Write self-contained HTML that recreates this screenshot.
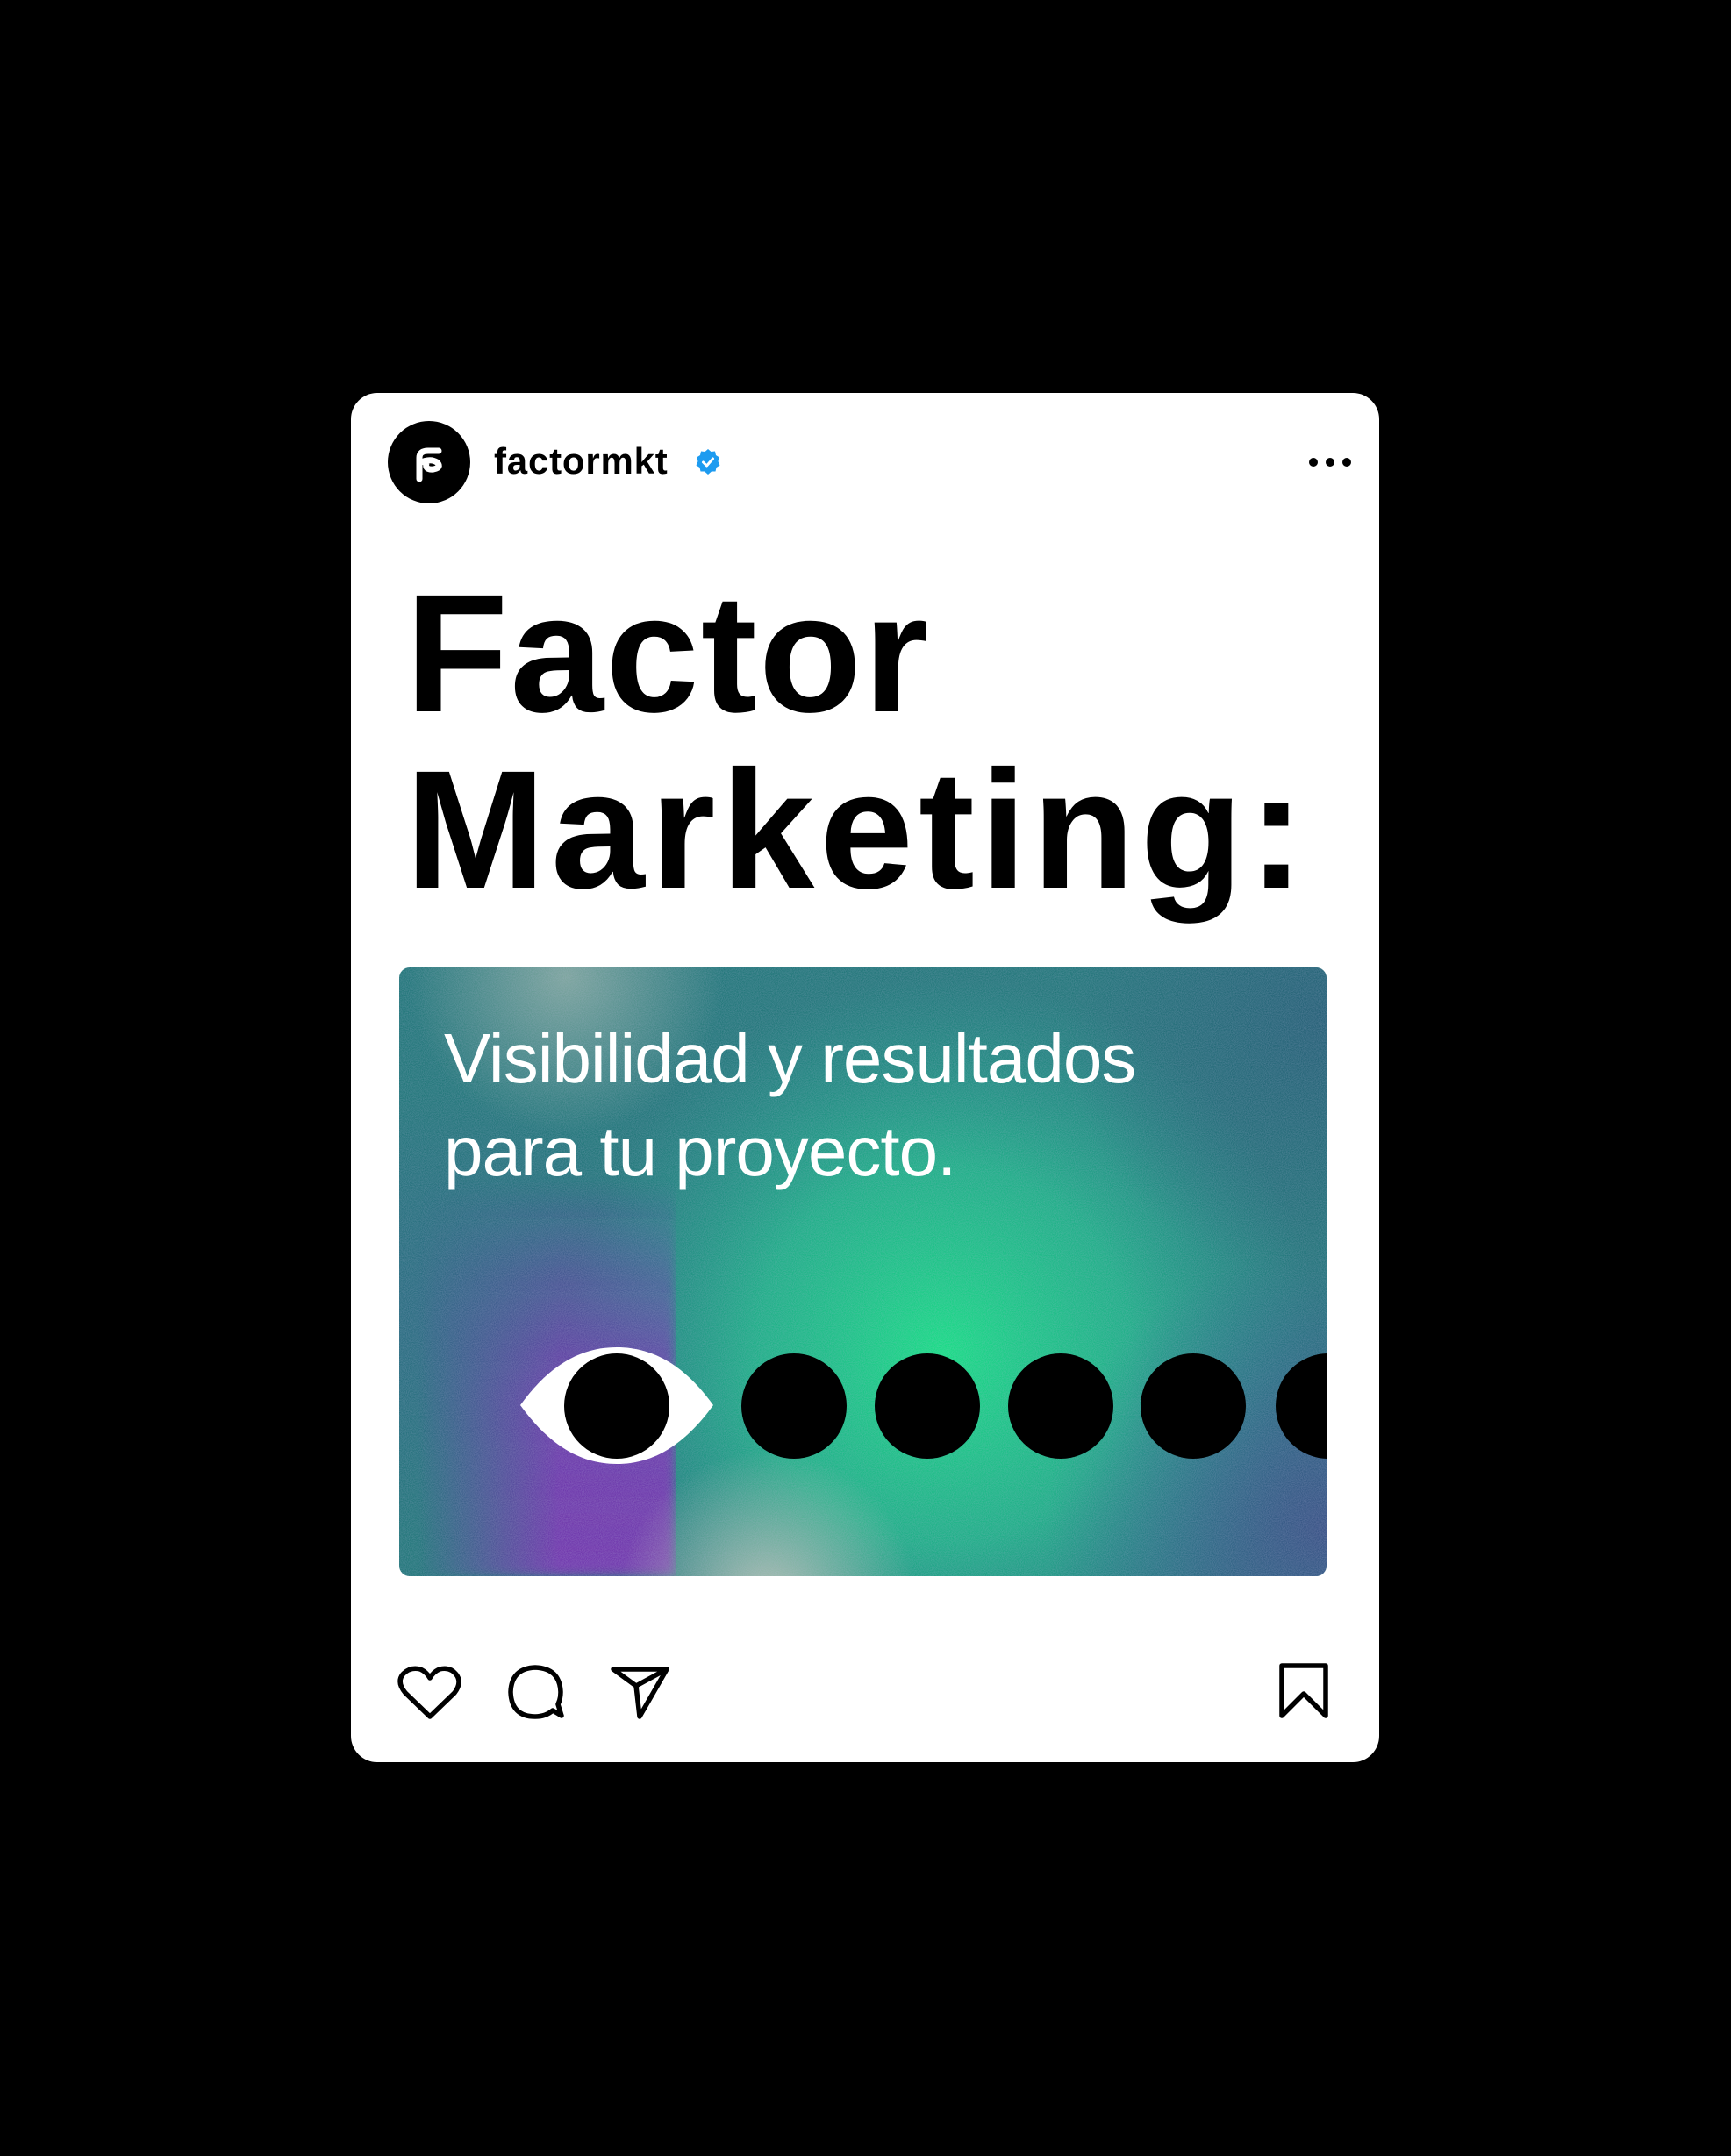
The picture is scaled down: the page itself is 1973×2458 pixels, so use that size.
<!DOCTYPE html>
<html><head><meta charset="utf-8"><style>
html,body{margin:0;padding:0;background:#000;}
body{width:1973px;height:2458px;position:relative;overflow:hidden;font-family:"Liberation Sans",sans-serif;}
.card{position:absolute;left:400px;top:448px;width:1172px;height:1561px;background:#fff;border-radius:30px;}
.av{position:absolute;left:442px;top:480px;width:94px;height:94px;border-radius:50%;background:#000;}
.user{position:absolute;left:563px;top:498px;font-weight:bold;font-size:42px;letter-spacing:0.8px;color:#000;line-height:56px;}
.h{position:absolute;left:462px;font-weight:bold;font-size:192px;color:#000;line-height:1;white-space:nowrap;}
.img{position:absolute;left:455px;top:1103px;width:1057px;height:694px;border-radius:12px;overflow:hidden;}
.sub{position:absolute;left:506px;font-size:80px;color:#fff;line-height:1;letter-spacing:-1px;white-space:nowrap;}
</style></head><body>
<div class="card"></div>
<div class="av"></div>
<svg style="position:absolute;left:442px;top:480px" width="94" height="94" viewBox="0 0 94 94">
<path d="M36 66 V42 Q36 34 46 34 H58 M36 48 Q48 42 56 47 Q62 53 52 55 Q42 56 44 48" fill="none" stroke="#fff" stroke-width="7" stroke-linecap="round"/>
</svg>
<div class="user">factormkt</div>
<svg style="position:absolute;left:791px;top:511px" width="32" height="32" viewBox="0 0 32 32">
<path d="M16 1 L19.5 4 L24 3.5 L25 8 L29 10.5 L27.5 15 L29.5 19.5 L25.5 22 L24.5 26.5 L20 26.5 L16 30 L12 26.5 L7.5 26.5 L6.5 22 L2.5 19.5 L4.5 15 L3 10.5 L7 8 L8 3.5 L12.5 4 Z" fill="#1d9bf0"/>
<path d="M10.5 16 L14.5 20 L21.5 12" fill="none" stroke="#fff" stroke-width="3" stroke-linecap="round" stroke-linejoin="round"/>
</svg>
<svg style="position:absolute;left:1490px;top:518px" width="52" height="18" viewBox="0 0 52 18">
<circle cx="7" cy="9" r="5"/><circle cx="26" cy="9" r="5"/><circle cx="45" cy="9" r="5"/>
</svg>
<div class="h" style="top:649px;letter-spacing:2px;">Factor</div>
<div class="h" style="top:850px;letter-spacing:6px;">Marketing:</div>
<div class="img">
<svg width="1057" height="694" viewBox="0 0 1057 694">
<defs>
<radialGradient id="g1" cx="620" cy="440" r="430" gradientUnits="userSpaceOnUse"><stop offset="0" stop-color="#05e27a"/><stop offset="0.5" stop-color="#0cc282" stop-opacity="0.75"/><stop offset="1" stop-color="#0ca088" stop-opacity="0"/></radialGradient>
<linearGradient id="pv" x1="0" y1="0" x2="0" y2="1"><stop offset="0.35" stop-color="#7420b0" stop-opacity="0"/><stop offset="0.7" stop-color="#7420b0" stop-opacity="0.8"/><stop offset="1" stop-color="#6a2aa8" stop-opacity="1"/></linearGradient>
<linearGradient id="ph" x1="0" y1="0" x2="1" y2="0"><stop offset="0" stop-color="#fff" stop-opacity="0"/><stop offset="0.55" stop-color="#fff" stop-opacity="1"/><stop offset="1" stop-color="#fff" stop-opacity="1"/></linearGradient>
<mask id="pm"><rect x="20" y="0" width="295" height="694" fill="url(#ph)"/></mask>
<radialGradient id="g3" cx="190" cy="10" r="180" gradientUnits="userSpaceOnUse"><stop offset="0" stop-color="#8fb0a0" stop-opacity="0.8"/><stop offset="1" stop-color="#8fb0a0" stop-opacity="0"/></radialGradient>
<radialGradient id="g4" cx="420" cy="720" r="170" gradientUnits="userSpaceOnUse"><stop offset="0" stop-color="#c0c8b4" stop-opacity="0.9"/><stop offset="1" stop-color="#b8c4b0" stop-opacity="0"/></radialGradient>
<radialGradient id="g5" cx="1057" cy="640" r="320" gradientUnits="userSpaceOnUse"><stop offset="0" stop-color="#30407e" stop-opacity="0.85"/><stop offset="1" stop-color="#2a4a8a" stop-opacity="0"/></radialGradient>
<radialGradient id="g6" cx="1057" cy="60" r="300" gradientUnits="userSpaceOnUse"><stop offset="0" stop-color="#16506a" stop-opacity="0.8"/><stop offset="1" stop-color="#16506a" stop-opacity="0"/></radialGradient>
<radialGradient id="g7" cx="60" cy="400" r="260" gradientUnits="userSpaceOnUse"><stop offset="0" stop-color="#24587e" stop-opacity="0.6"/><stop offset="1" stop-color="#24587e" stop-opacity="0"/></radialGradient>
<filter id="n"><feTurbulence type="fractalNoise" baseFrequency="0.95" numOctaves="1" seed="3"/><feColorMatrix values="0 0 0 0 0.5  0 0 0 0 0.5  0 0 0 0 0.75  0 0 0 0.4 0"/></filter>
<filter id="b"><feGaussianBlur stdDeviation="6"/></filter>
</defs>
<rect width="1057" height="694" fill="#12706f"/>
<rect width="1057" height="694" fill="url(#g7)"/>
<rect width="1057" height="694" fill="url(#g1)"/>
<rect x="20" y="0" width="295" height="694" fill="url(#pv)" mask="url(#pm)" filter="url(#b)"/>
<rect width="1057" height="694" fill="url(#g3)"/>
<rect width="1057" height="694" fill="url(#g4)"/>
<rect width="1057" height="694" fill="url(#g5)"/>
<rect width="1057" height="694" fill="url(#g6)"/>
<rect width="1057" height="694" filter="url(#n)"/>
<path d="M138 499 C172 452 208 433 248 433 C288 433 324 452 358 499 C324 546 288 566 248 566 C208 566 172 546 138 499 Z" fill="#fff"/>
<circle cx="248" cy="500" r="60" fill="#000"/>
<circle cx="450" cy="500" r="60"/><circle cx="602" cy="500" r="60"/><circle cx="754" cy="500" r="60"/><circle cx="905" cy="500" r="60"/><circle cx="1059" cy="500" r="60"/>
</svg>
</div>
<div class="sub" style="top:1167px;">Visibilidad y resultados</div>
<div class="sub" style="top:1273px;">para tu proyecto.</div>
<svg style="position:absolute;left:450px;top:1895px" width="1070" height="70" viewBox="450 1895 1070 70" fill="none" stroke="#000" stroke-width="5.5" stroke-linejoin="round" stroke-linecap="round">
<path d="M490 1957 L462 1930 Q452 1918 459 1909 Q467 1900 479 1903 Q486 1906 490 1913 Q494 1906 501 1903 Q513 1900 520 1909 Q527 1918 518 1930 Z"/>
<path d="M630 1950 Q622 1957 610 1957 Q583 1957 582 1929 Q583 1902 610 1901 Q638 1902 639 1929 Q639 1937 636 1943 L640 1956 Z"/>
<path d="M699 1903 L760 1903 L725 1922 Z M760 1903 L729 1957 L725 1922"/>
<path d="M1461 1899 L1511 1899 L1511 1956 L1486 1931 L1461 1956 Z"/>
</svg>
</body></html>
